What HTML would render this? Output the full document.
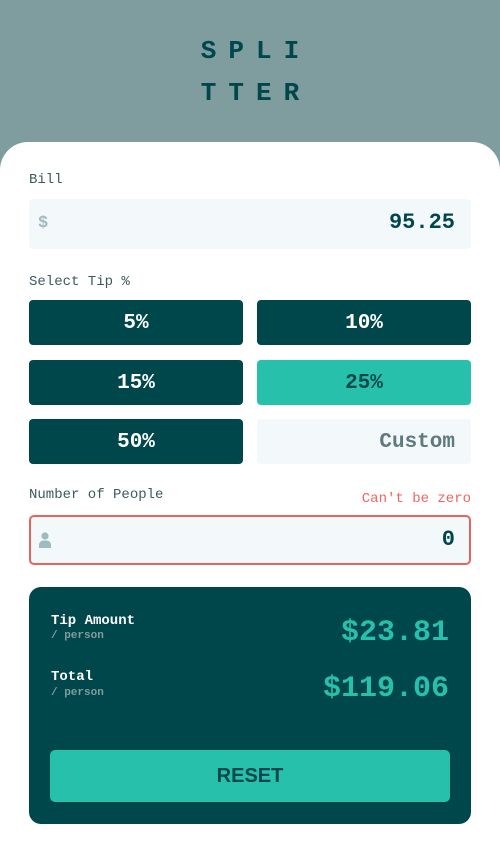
<!DOCTYPE html>
<html><head><style>
*{margin:0;padding:0;box-sizing:border-box}
body{width:500px;height:852px;background:#7f9d9e;font-family:"Liberation Mono",monospace;position:relative;overflow:hidden}
.t{position:absolute;left:0;width:500px;text-align:center;color:#00474b;font-weight:bold;font-size:26px;letter-spacing:12px;line-height:40px;padding-left:12px}
.card{position:absolute;left:0;top:142px;width:500px;height:720px;background:#fff;border-radius:28px 28px 0 0}
.a{position:absolute}
.lbl{font-size:14px;color:#3d5a5c}
.inp{left:29px;width:442px;height:50px;background:#f3f8fb;border-radius:4px}
.btn{position:absolute;width:214px;height:45px;border-radius:4px;background:#00474b;color:#fff;font-weight:bold;font-size:21px;text-align:center;line-height:47px}
</style></head><body>
<div class="t" style="top:31px">SPLI</div>
<div class="t" style="top:73px">TTER</div>
<div class="card"></div>
<div class="a lbl" style="left:29px;top:172px">Bill</div>
<div class="a inp" style="top:199px"><span class="a" style="left:9px;top:15px;color:#9ebbbd;font-weight:bold;font-size:17px">$</span><span class="a" style="right:16px;top:11px;color:#00474b;font-weight:bold;font-size:22px">95.25</span></div>
<div class="a lbl" style="left:29px;top:274px">Select Tip %</div>
<div class="btn" style="left:29px;top:300px">5%</div>
<div class="btn" style="left:257px;top:300px">10%</div>
<div class="btn" style="left:29px;top:360px">15%</div>
<div class="btn" style="left:257px;top:360px;background:#26c0ab;color:#00474b">25%</div>
<div class="btn" style="left:29px;top:419px">50%</div>
<div class="btn" style="left:257px;top:419px;background:#f3f8fb;color:#5e7a7d;text-align:right;padding-right:16px">Custom</div>
<div class="a lbl" style="left:29px;top:487px">Number of People</div>
<div class="a" style="right:29px;top:491px;font-size:14px;color:#f0655e">Can't be zero</div>
<div class="a inp" style="top:515px;height:50px;border:2px solid #e5645f;border-radius:5px">
<svg class="a" style="left:8px;top:15px" width="12" height="16" viewBox="0 0 12 16"><circle cx="6" cy="4" r="3.6" fill="#9ebbbd"/><path d="M0 16v-3c0-2.5 2-4.5 4.5-4.5h3c2.5 0 4.5 2 4.5 4.5v3z" fill="#9ebbbd"/></svg>
<span class="a" style="right:14px;top:10px;color:#00474b;font-weight:bold;font-size:22px">0</span></div>
<div class="a" style="left:29px;top:587px;width:442px;height:237px;background:#00474b;border-radius:12px">
<div class="a" style="left:22px;top:26px;color:#fff;font-weight:bold;font-size:14px">Tip Amount</div>
<div class="a" style="left:22px;top:43px;color:#7f9d9e;font-weight:bold;font-size:11px">/ person</div>
<div class="a" style="right:22px;top:29px;color:#26c0ab;font-weight:bold;font-size:30px">$23.81</div>
<div class="a" style="left:22px;top:82px;color:#fff;font-weight:bold;font-size:14px">Total</div>
<div class="a" style="left:22px;top:100px;color:#7f9d9e;font-weight:bold;font-size:11px">/ person</div>
<div class="a" style="right:22px;top:85px;color:#26c0ab;font-weight:bold;font-size:30px">$119.06</div>
<div class="a" style="left:21px;top:163px;width:400px;height:52px;background:#26c0ab;border-radius:5px;color:#00474b;font-family:'Liberation Sans',sans-serif;font-weight:bold;font-size:20px;text-align:center;line-height:52px">RESET</div>
</div>
</body></html>
